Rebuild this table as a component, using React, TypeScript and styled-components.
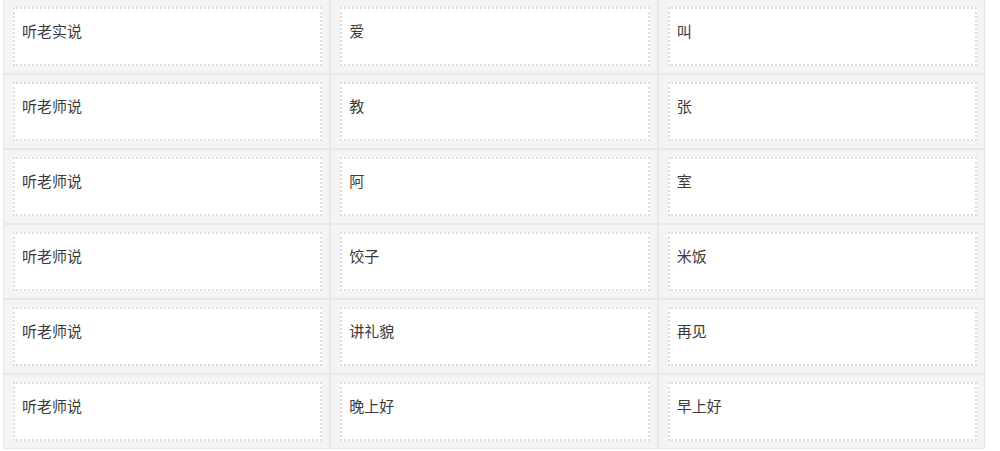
import React from "react";
import styled, { createGlobalStyle } from "styled-components";

const Global = createGlobalStyle`
  html, body { margin: 0; padding: 0; background: #ffffff; }
  body { font-family: "Noto Sans CJK SC", "Noto Sans", sans-serif; }
`;

const Page = styled.div`
  padding: 0 15px 0 3px;
  overflow: hidden;
  height: 451px;
`;

const Table = styled.div`
  margin-top: -1px;
  display: grid;
  grid-template-columns: repeat(3, 1fr);
  gap: 2px;
  background: #e8e8e8;
  border: 1px solid #e8e8e8;
`;

const Cell = styled.div`
  background: #f4f4f4;
  padding: 7px 7px 7px 9px;
  height: 73px;
  box-sizing: border-box;
`;

const Box = styled.div`
  height: 100%;
  box-sizing: border-box;
  background: #ffffff;
  border: 2px dotted #dcdcdc;
  padding: 12px 7px;
  font-size: 15px;
  line-height: 20px;
  color: #3a3a3a;
`;

const rows: [string, string, string][] = [
  ["听老实说", "爱", "叫"],
  ["听老师说", "教", "张"],
  ["听老师说", "阿", "室"],
  ["听老师说", "饺子", "米饭"],
  ["听老师说", "讲礼貌", "再见"],
  ["听老师说", "晚上好", "早上好"],
];

export default function App() {
  return (
    <>
      <Global />
      <Page>
        <Table>
          {rows.flatMap((r, i) =>
            r.map((t, j) => (
              <Cell key={`${i}-${j}`}>
                <Box>{t}</Box>
              </Cell>
            ))
          )}
        </Table>
      </Page>
    </>
  );
}
